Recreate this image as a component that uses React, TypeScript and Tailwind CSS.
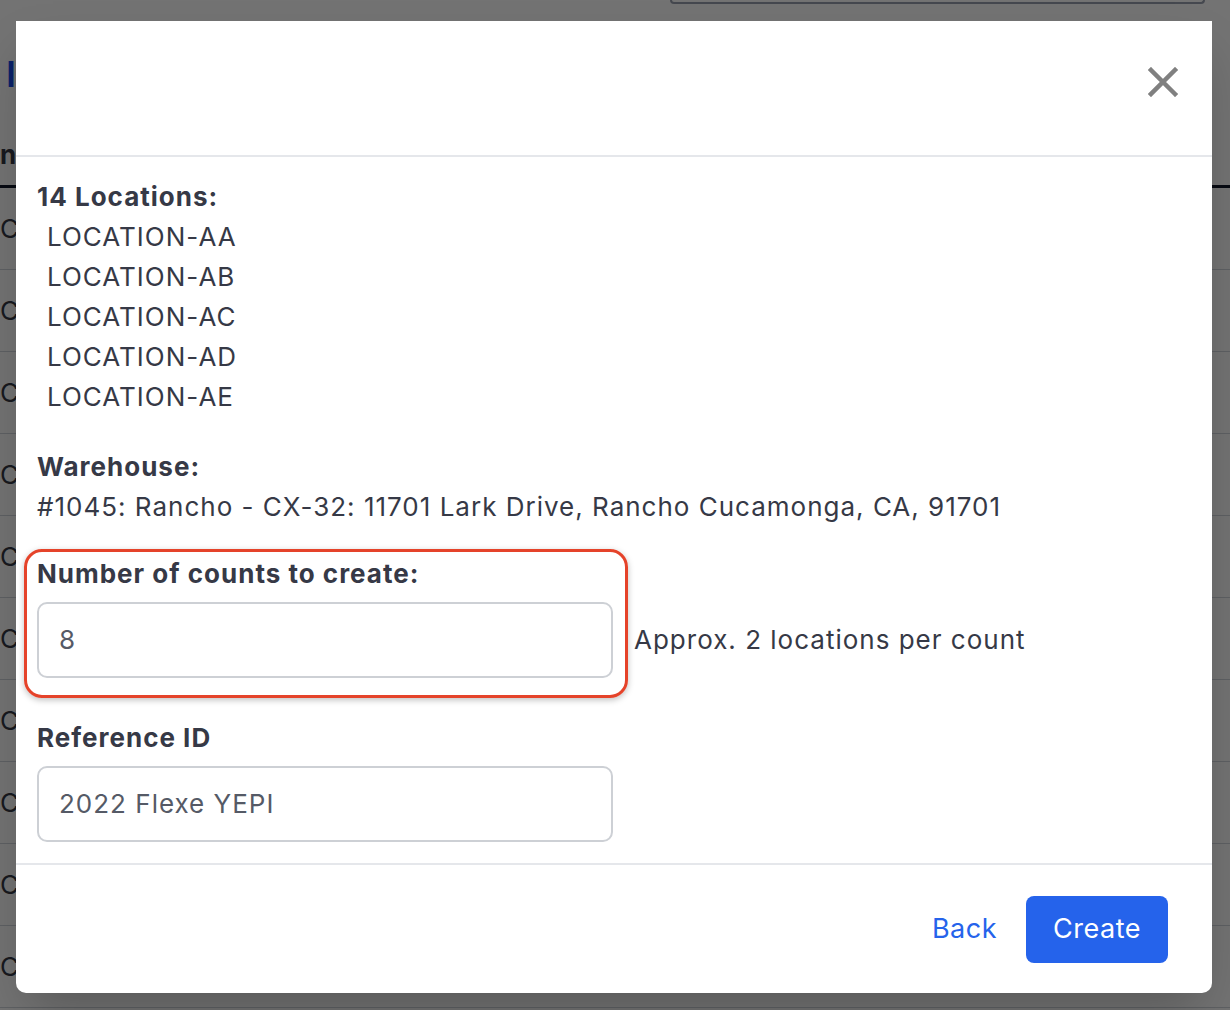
import React from 'react';

const LOCATIONS = ['LOCATION-AA', 'LOCATION-AB', 'LOCATION-AC', 'LOCATION-AD', 'LOCATION-AE'];
const ROW_COUNT = 10;

const CloseIcon: React.FC = () => (
  <svg width="30" height="30" viewBox="0 0 30 30" fill="none">
    <path d="M3 3 L27 27 M27 3 L3 27" stroke="#808080" strokeWidth="4.5" strokeLinecap="square" />
  </svg>
);

const App: React.FC = () => {
  return (
    <div className="relative h-[1010px] w-[1230px] overflow-hidden bg-white font-['Inter',sans-serif] text-[#363946]">
      {/* page behind the modal, only its left edge shows */}
      <div className="flex flex-col">
        <div className="ml-[670px] h-[4px] w-[535px] rounded-b-lg border-x-2 border-b-2 border-gray-400" />
        <div className="mt-[48px] pl-[6px] text-[36px] font-semibold leading-[44px] text-blue-700">I</div>
        <div className="border-b-[3px] border-gray-900 pb-[15px] pt-[44px] text-[26px] font-bold leading-[30px]">n</div>
        {Array.from({ length: ROW_COUNT }, (_, i) => (
          <div key={i} className="flex h-[82px] items-center border-b border-gray-300 text-[26px]">
            C
          </div>
        ))}
      </div>

      <div className="absolute inset-0 bg-black/55" />

      {/* modal */}
      <div className="absolute left-4 top-[21px] w-[1196px] rounded-b-[10px] bg-white shadow-2xl">
        <div className="flex h-[136px] justify-end border-b-2 border-gray-200 pr-[34px] pt-[46px]">
          <CloseIcon />
        </div>

        <div className="px-[21px] pb-[21px] pt-[20px] text-[26px] leading-[40px] tracking-[1px]">
          <div className="mb-[30px]">
            <div className="font-bold">14 Locations:</div>
            {LOCATIONS.map((loc) => (
              <div key={loc} className="pl-[10px]">{loc}</div>
            ))}
          </div>

          <div>
            <div className="font-bold">Warehouse:</div>
            <div>#1045: Rancho - CX-32: 11701 Lark Drive, Rancho Cucamonga, CA, 91701</div>
          </div>

          <div className="relative mt-[27px]">
            <div className="pointer-events-none absolute -left-[13px] -top-[5px] h-[149px] w-[604px] rounded-[18px] border-[3px] border-[#e5432a] shadow-[0_2px_6px_rgba(0,0,0,0.25)]" />
            <div className="font-bold">Number of counts to create:</div>
            <div className="mt-[8px] flex items-center">
              <div className="flex h-[76px] w-[576px] items-center rounded-[10px] border-2 border-[#cdd0d5] px-[20px] text-[#555a66]">8</div>
              <div className="ml-[21px]">Approx. 2 locations per count</div>
            </div>
          </div>

          <div className="mt-[40px]">
            <div className="font-bold">Reference ID</div>
            <div className="mt-[8px] flex h-[76px] w-[576px] items-center rounded-[10px] border-2 border-[#cdd0d5] px-[20px] text-[#555a66]">
              2022 Flexe YEPI
            </div>
          </div>
        </div>

        <div className="flex h-[130px] items-center justify-end gap-[29px] border-t-2 border-gray-200 pr-[44px] tracking-[0.5px]">
          <span className="text-[27px] text-[#2563eb]">Back</span>
          <button className="h-[67px] w-[142px] rounded-[8px] bg-[#2563eb] text-[27px] text-white">Create</button>
        </div>
      </div>
    </div>
  );
};

export default App;
